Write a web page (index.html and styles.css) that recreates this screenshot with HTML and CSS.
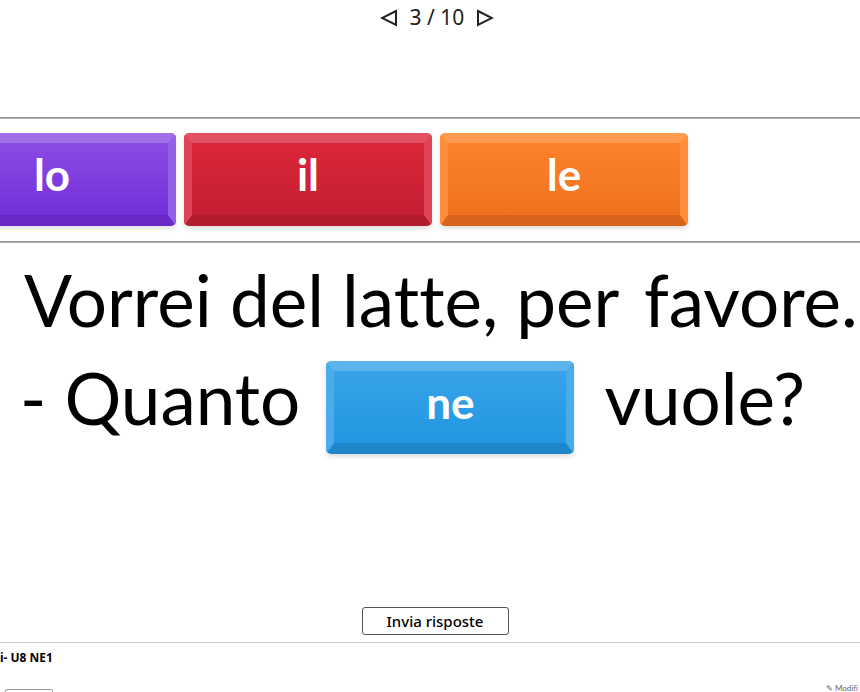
FILE: index.html
```html
<!DOCTYPE html>
<html>
<head>
<meta charset="utf-8">
<link rel="stylesheet" href="styles.css">
</head>
<body>
<div class="page">
  <div class="nav">
    <svg class="arrow" width="18" height="18" viewBox="0 0 18 18"><path d="M16 2 L2 9 L16 16 Z" fill="none" stroke="#222" stroke-width="2" stroke-linejoin="miter"/></svg>
    <span class="count">3 / 10</span>
    <svg class="arrow" width="18" height="18" viewBox="0 0 18 18"><path d="M2 2 L16 9 L2 16 Z" fill="none" stroke="#222" stroke-width="2" stroke-linejoin="miter"/></svg>
  </div>
  <div class="rule top"></div>
  <div class="tiles">
    <div class="tile purple first"><span>lo</span></div>
    <div class="tile red"><span>il</span></div>
    <div class="tile orange"><span>le</span></div>
  </div>
  <div class="rule"></div>
  <div class="sentence">
    <div class="line one">Vorrei del latte, per <span class="gap">favore.</span></div>
    <div class="line two">
      <span class="word">- Quanto</span>
      <div class="tile blue"><span>ne</span></div>
      <span class="word">vuole?</span>
    </div>
  </div>
  <div class="submit-row">
    <button class="submit">Invia risposte</button>
  </div>
  <div class="footer">
    <div class="title">i- U8 NE1</div>
    <div class="foot-row">
      <div class="stub"></div>
      <div class="edit">✎ Modifi</div>
    </div>
  </div>
</div>
</body>
</html>
```
FILE: styles.css
```css
html, body {
  margin: 0;
  padding: 0;
  background: #fff;
  overflow: hidden;
}
.page {
  width: 860px;
  height: 692px;
  overflow: hidden;
  font-family: "Lato", "Noto Sans", sans-serif;
  font-variant-ligatures: none;
  color: #000;
}
.nav {
  height: 35px;
  display: flex;
  align-items: center;
  justify-content: center;
  gap: 12px;
  padding-left: 14px;
}
.count {
  font-family: "Noto Sans", sans-serif;
  font-size: 21px;
  color: #222;
  line-height: 1;
}
.arrow { display: block; }
.rule {
  height: 2px;
  background: linear-gradient(#8c8c8c, #b8b8b8);
}
.rule.top { margin-top: 82px; }
.tiles {
  display: flex;
  gap: 8px;
  padding: 14px 0 15px 0;
  margin-left: -72px;
}
.tile {
  box-sizing: border-box;
  width: 248px;
  height: 93px;
  border-radius: 5px;
  border-style: solid;
  border-width: 10px 8px 11px 8px;
  display: flex;
  align-items: center;
  justify-content: center;
  color: #fff;
  font-size: 44px;
  font-weight: 700;
  line-height: 1;
  box-shadow: 0 3px 4px rgba(0,0,0,0.12);
  flex: none;
}
.tile span { position: relative; top: -5px; }
.purple {
  border-color: #a170e8 #9560e6 #6a28c9 #9560e6;
  background: linear-gradient(#8a4ae3, #7330da);
}
.red {
  border-color: #e25264 #df4456 #b21c2c #df4456;
  background: linear-gradient(#da2638, #c41f33);
}
.orange {
  border-color: #ff9a50 #fe8d3c #d8641c #fe8d3c;
  background: linear-gradient(#fd822a, #f07220);
}
.blue {
  border-color: #5eb5ee #4aaceb #1e86ca #4aaceb;
  background: linear-gradient(#37a3e8, #2297e1);
}
.sentence {
  padding-left: 24px;
}
.line {
  font-size: 71px;
  line-height: 71px;
  white-space: nowrap;
}
.line.one {
  margin-top: 21px;
}
.line.one .gap { margin-left: 8px; }
.line.two {
  display: flex;
  align-items: flex-start;
  margin-top: 26px;
  margin-left: -4px;
}
.line.two .word { margin-top: 1px; }
.line.two .tile { margin: 0 30px 0 26px; }
.submit-row {
  display: flex;
  justify-content: center;
  margin-top: 153px;
  padding-left: 10px;
}
.submit {
  width: 147px;
  height: 28px;
  background: #fff;
  border: 1px solid #555;
  border-radius: 3px;
  font-family: "Noto Sans", sans-serif;
  font-size: 15px;
  font-weight: 500;
  color: #000;
  padding: 0;
}
.footer {
  margin-top: 7px;
  border-top: 1px solid #ccc;
}
.title {
  font-family: "Noto Sans", sans-serif;
  font-weight: 700;
  font-size: 12px;
  padding-top: 6px;
  height: 20px;
}
.foot-row {
  display: flex;
  justify-content: space-between;
  margin-top: 20px;
}
.stub {
  width: 46px;
  height: 10px;
  margin-left: 5px;
  border: 1px solid #999;
  border-radius: 2px;
}
.edit {
  font-size: 8px;
  line-height: 10px;
  color: #666;
  margin-top: -6px;
  padding-right: 2px;
}
```
